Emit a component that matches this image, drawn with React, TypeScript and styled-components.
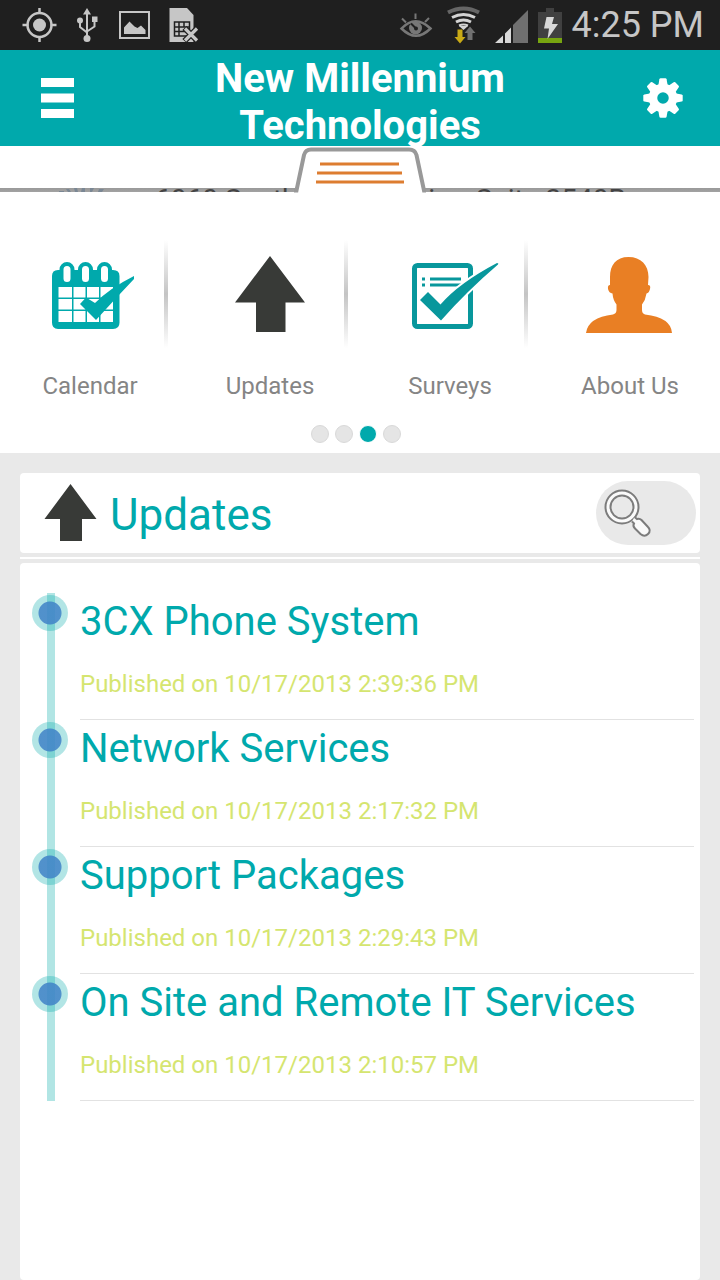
import React from "react";
import styled, { createGlobalStyle } from "styled-components";

const TEAL = "#00a9ac";
const INK = "#383a37";

const GlobalStyle = createGlobalStyle`
  *, *::before, *::after { box-sizing: border-box; }
  body {
    margin: 0;
    background: #e9e9e9;
    font-family: Roboto, "Liberation Sans", sans-serif;
  }
  button { border: 0; padding: 0; background: none; font: inherit; color: inherit; cursor: pointer; }
  svg { display: block; flex: none; }
`;

const Page = styled.div`
  min-height: 100vh;
  display: flex;
  flex-direction: column;
`;

const StatusBar = styled.div`
  height: 50px;
  padding: 0 16px 0 22px;
  display: flex;
  align-items: center;
  justify-content: space-between;
  background: #1f1f1f;
  color: #c6c6c6;
`;

const StatusGroup = styled.div`
  display: flex;
  align-items: center;
`;

const Clock = styled.time`
  margin-left: 9px;
  font-size: 36px;
  line-height: 48px;
  white-space: nowrap;
`;

const Header = styled.header`
  position: relative;
  z-index: 3;
  height: 96px;
  padding: 0 34px;
  display: flex;
  align-items: center;
  justify-content: space-between;
  background: ${TEAL};
  color: #fff;
`;

const AppTitle = styled.h1`
  margin: 0;
  padding-top: 8px;
  max-width: 320px;
  text-align: center;
  font-size: 40px;
  line-height: 47px;
  font-weight: 700;
`;

const IconButton = styled.button`
  width: 46px;
  height: 44px;
  display: grid;
  place-items: center;
`;

const AddressBanner = styled.section`
  position: relative;
  height: 47px;
  overflow: hidden;
  background: #fff;
`;

const AddressLine = styled.div`
  height: 47px;
  padding: 34px 0 0 56px;
  display: flex;
  gap: 51px;
  background: linear-gradient(#fff 42px, #999 42px, #a2a2a2 46px, #fff 46px);
`;

const AddressText = styled.p`
  margin: 0;
  padding-top: 4px;
  height: 12px;
  overflow: hidden;
  font-size: 28px;
  line-height: 32px;
  white-space: nowrap;
  color: #444;
`;

const AddressIcon = styled.svg`
  margin-top: 7px;
`;

const DrawerTab = styled.button`
  position: absolute;
  top: 0;
  left: calc(50% - 66px);
`;

const Menu = styled.nav`
  padding-top: 47px;
  display: grid;
  grid-template-columns: repeat(4, 1fr);
  background: #fff;
`;

const MenuItem = styled.div`
  display: grid;
  grid-template-columns: 16px 1fr 16px;
`;

const MenuButton = styled.button`
  grid-column: 2;
  padding-top: 5px;
  display: flex;
  flex-direction: column;
  align-items: center;
  gap: 27px;
  font-size: 24px;
  line-height: 28px;
  white-space: nowrap;
  color: #858585;
`;

const MenuDivider = styled.span`
  width: 4px;
  height: 108px;
  background: linear-gradient(rgba(190, 190, 190, 0), #c4c4c4 50%, rgba(190, 190, 190, 0));
`;

const Pager = styled.div`
  height: 53px;
  padding: 25px 8px 0 0;
  display: flex;
  justify-content: center;
  gap: 6px;
  background: #fff;
`;

const PagerDot = styled.button<{ $active?: boolean }>`
  width: 18px;
  height: 18px;
  border-radius: 50%;
  border: 1px solid ${(p) => (p.$active ? "#fff" : "#d9d9d9")};
  background: ${(p) => (p.$active ? TEAL : "#e5e5e5")};
`;

const Content = styled.main`
  flex: 1;
  padding: 20px 20px 0;
  display: flex;
  flex-direction: column;
  gap: 4px;
`;

const SectionHeader = styled.div`
  height: 80px;
  padding: 0 4px 0 24px;
  display: flex;
  align-items: center;
  border-radius: 4px;
  background: #fff;
`;

const SectionTitle = styled.h2`
  flex: 1;
  margin: 0;
  padding: 4px 0 0 13px;
  font-size: 44px;
  line-height: 52px;
  font-weight: 400;
  color: ${TEAL};
`;

const SearchButton = styled.button`
  width: 100px;
  height: 64px;
  padding-left: 7px;
  border-radius: 32px;
  background: #e9e9e9;
`;

const Strip = styled.div`
  height: 2px;
  background: #fff;
`;

const UpdateList = styled.ul`
  flex: 1;
  margin: 0;
  padding: 30px 6px 20px 12px;
  list-style: none;
  border-radius: 4px;
  background: #fff;
`;

const UpdateRow = styled.li`
  display: flex;
  gap: 12px;
`;

const Timeline = styled.div`
  width: 36px;
  flex: none;
  padding-top: 2px;
  background: linear-gradient(#b1e5e4, #b1e5e4) 15px 0 / 8px 100% no-repeat;
`;

const TimelineDot = styled.div`
  width: 36px;
  height: 36px;
  border-radius: 50%;
  background: radial-gradient(circle, rgba(62, 133, 198, 0.9) 11px, rgba(0, 169, 169, 0.3) 12px);
`;

const UpdateBody = styled.article`
  flex: 1;
  padding: 5px 0 21px;
  display: flex;
  flex-direction: column;
  gap: 24px;
  border-bottom: 1px solid #e2e2e2;
`;

const UpdateTitle = styled.a`
  font-size: 40px;
  line-height: 48px;
  color: ${TEAL};
  text-decoration: none;
`;

const Published = styled.p`
  margin: 0;
  font-size: 24px;
  line-height: 28px;
  color: #d5e570;
`;

const StatusLeftIcons = () => (
  <svg width="180" height="50" viewBox="22 0 180 50" fill="none" stroke="#c6c6c6" aria-hidden="true">
    <circle cx="39.500" cy="25" r="12" strokeWidth="2.500" />
    <circle cx="39.500" cy="25" r="6.500" fill="#c6c6c6" stroke="none" />
    <path d="M39.500 8v6M39.500 36v6M22.500 25h6M50.500 25h6" strokeWidth="2.500" />
    <path d="M87 14v24M80 22v5l7 5.500M94.500 20v6.500l-7.500 5" strokeWidth="2" />
    <path d="M87 8l4 6.500h-8zM92 16.500h5.500V22H92z" fill="#c6c6c6" stroke="none" />
    <circle cx="80" cy="20.500" r="3" fill="#c6c6c6" stroke="none" />
    <circle cx="87" cy="38.500" r="3.500" fill="#c6c6c6" stroke="none" />
    <path d="M120 12h29v26h-29z" strokeWidth="2" />
    <path d="M124 34v-6.500l5.500-6 5 5 3 1.500 3.500-2.500 4.500 4.500v4z" fill="#c6c6c6" stroke="none" />
    <path d="M169.500 8H187l6.500 7v27h-24z" fill="#c6c6c6" stroke="none" />
    <path d="M174.500 22h15v14h-15zM174.500 27h15M174.500 31.500h15M179 22v14M184 22v5" stroke="#1f1f1f" strokeWidth="1.500" />
    <path d="M184.500 28l13 13M197.500 28l-13 13" stroke="#1f1f1f" strokeWidth="6" />
    <path d="M185 28.500l12 12M197 28.500l-12 12" strokeWidth="3.200" />
  </svg>
);

const StatusRightIcons = () => (
  <svg width="166" height="50" viewBox="397 0 166 50" fill="none" aria-hidden="true">
    <g stroke="#777">
      <path d="M401.500 28.500q14-14.500 29 0q-14.500 14.500-29 0z" strokeWidth="2.500" />
      <path d="M402 18.500l4 4M415.500 13.500v5.500M429 18l-4 4" strokeWidth="2" />
      <circle cx="415.500" cy="28" r="6.500" fill="#777" stroke="none" />
      <path d="M416 28.500l-5-5" stroke="#1f1f1f" strokeWidth="2" />
      <circle cx="416" cy="28.500" r="2" fill="#1f1f1f" stroke="none" />
    </g>
    <path d="M448 12.500q15.500-8 31 0" stroke="#666" strokeWidth="4" />
    <g stroke="#d4d4d4" strokeWidth="3">
      <path d="M452 17.500q11.500-6 23 0" />
      <path d="M456 22q7.500-4 15 0" />
      <path d="M459 25.500q4.500-2 9 0" strokeWidth="2" />
    </g>
    <path d="M459 26h9l-4.500 4z" fill="#d4d4d4" />
    <path d="M457.500 29.500h5V37h3l-5.500 6.500-5.500-6.500h3z" fill="#c9aa16" />
    <path d="M470 26.500l5.500 6.500h-3v7h-5v-7h-3z" fill="#707070" />
    <path d="M495 43l8-7.500V43zM505 33.500l6-6V43h-6z" fill="#d8d8d8" />
    <path d="M513 25l15-15v33h-15z" fill="#707070" />
    <path d="M546 8h8v4h8v26h-24V12h8z" fill="#404040" />
    <path d="M538 38h24v5h-24z" fill="#77a510" />
    <path d="M546.500 17h7.500l-2 7h6l-10.500 15 1.500-10.500h-5z" fill="#d8d8d8" />
  </svg>
);

const BarsIcon = () => (
  <svg width="33" height="40" fill="#fff" aria-hidden="true">
    <path d="M0 0h33v9H0zM0 15.500h33v9H0zM0 31h33v9H0z" />
  </svg>
);

const GearIcon = () => (
  <svg width="40" height="40" viewBox="-20 -20 40 40" fill="#fff" aria-hidden="true">
    <circle r="10" fill="none" stroke="#fff" strokeWidth="8.500" />
    {[0, 45, 90, 135, 180, 225, 270, 315].map((a) => (
      <path key={a} d="M-4.800-12l1.200-6.700q.2-1 1.200-1h4.800q1 0 1.200 1L4.800-12z" transform={`rotate(${a})`} />
    ))}
  </svg>
);

const TabIcon = () => (
  <svg width="132" height="47" viewBox="0 0 132 47" fill="none" aria-hidden="true">
    <path d="M0 46.500L2.500 43 10 9Q11.500 3 17 3h99q5.500 0 7 6l7 34 1.500 3.500z" fill="#fff" />
    <path d="M0 44.500h2.500L10 9Q11.500 3.500 17 3.500h98q6 0 7.500 5.500l7.500 35.500h2" stroke="#999" strokeWidth="4" />
    <path d="M26 18h79M23 27h85M22 36h88" stroke="#dd7d30" strokeWidth="3" />
  </svg>
);

const BuildingIcon = () => (
  <AddressIcon width="48" height="6" fill="#7a8794" aria-hidden="true">
    <path d="M3 4h5v1H3zM10 2l3 0 2 3h-3zM18 1h3l1 4h-3zM26 1h3v4h-4zM34 1h4l-2 4h-2zM43 2h5l-2 3h-4z" />
  </AddressIcon>
);

const CalendarIcon = () => (
  <svg width="100" height="100" viewBox="40 245 100 100" aria-hidden="true">
    <path fill={TEAL} d="M58 270h55q6.500 0 6.500 6v46.500q0 6.500-6.500 6.500H58q-6 0-6-6.500V276q0-6 6-6z" />
    <path stroke={TEAL} strokeWidth="15" strokeLinecap="round" d="M67 269.500v10M85.500 269.500v10M104.500 269.500v10" />
    <path stroke="#fff" strokeWidth="7" strokeLinecap="round" d="M67 269.500v9M85.500 269.500v9M104.500 269.500v9" />
    <path fill="#fff" d="M58.500 287h13.500v10.500H58.500zM73.500 287h12v10.500h-12zM87 287h12v10.500H87zM100.500 287h12.500v10.500h-12.500zM58.500 299h13.500v10.500H58.500zM73.500 299h12v10.500h-12zM87 299h12v10.500H87zM100.500 299h12.500v10.500h-12.500zM58.500 311h13.500v11H58.500zM73.500 311h12v11h-12zM87 311h12v11H87zM100.500 311h12.500v11h-12.500z" />
    <path fill={TEAL} d="M80 304l6-6.500 9 5.500q15-15 39-27v3q-19 20-38 41z" />
  </svg>
);

const ArrowIcon = () => (
  <svg width="100" height="100" viewBox="220 245 100 100" fill={INK} aria-hidden="true">
    <path d="M270 256l35 46.500h-19.500V332h-29.500v-29.500H235z" />
  </svg>
);

const SmallArrowIcon = () => (
  <svg width="53" height="58" viewBox="0 0 53 58" fill={INK} aria-hidden="true">
    <path d="M26.500 0L52.500 35H38v22H16V35H0.500z" />
  </svg>
);

const SurveyIcon = () => (
  <svg width="100" height="100" viewBox="400 245 100 100" aria-hidden="true">
    <rect x="414.500" y="265.500" width="56" height="61" rx="3" fill="#fff" stroke="#08979c" strokeWidth="5" />
    <path fill="#08979c" d="M422 277.500h3v3h-3zM422 283.500h3v3h-3zM430 277.500h31v3h-31zM430 283.500h31v3h-31z" />
    <path fill="#08979c" stroke="#fff" strokeWidth="4" paintOrder="stroke" d="M420 300l8-8 12.500 12.500Q459 283 497 263q2 0 1 1.500Q467 291 441 320.500z" />
  </svg>
);

const PersonIcon = () => (
  <svg width="100" height="100" viewBox="580 245 100 100" fill="#e97f24" aria-hidden="true">
    <path d="M628.500 257C641 257 648.500 265 648.500 277L648 285Q651 285 650 289Q649 293 646.500 293.500Q645.500 300 642 304.500V310Q642 313.500 645 314.500Q671 317.500 672 333H586Q588 317.500 613 314.500Q616.500 313.500 616.500 310V304.500Q613 300 612.500 293.500Q609 293 608 289Q607.500 285 610 285V277C610 265 616 257 628.500 257Z" />
  </svg>
);

const SearchIcon = () => (
  <svg width="50" height="52" viewBox="0 0 50 52" fill="none" aria-hidden="true">
    <g stroke="#7c7c7c" strokeWidth="2">
      <circle cx="19" cy="20" r="16.500" fill="#fafafa" />
      <circle cx="19" cy="20" r="11.500" fill="#e9e9e9" />
      <path
        fill="#fafafa"
        d="M29 34.500l2 2q-1.500 2.500 1 5l5.500 5.500q4 3.500 7.500 0t0-7L38.500 33q-2-2-4.500-1l-2.500-2"
      />
    </g>
  </svg>
);

const menuItems = [
  { label: "Calendar", icon: <CalendarIcon /> },
  { label: "Updates", icon: <ArrowIcon /> },
  { label: "Surveys", icon: <SurveyIcon /> },
  { label: "About Us", icon: <PersonIcon /> },
];

const updates = [
  { title: "3CX Phone System", published: "10/17/2013 2:39:36 PM" },
  { title: "Network Services", published: "10/17/2013 2:17:32 PM" },
  { title: "Support Packages", published: "10/17/2013 2:29:43 PM" },
  { title: "On Site and Remote IT Services", published: "10/17/2013 2:10:57 PM" },
];

export default function App() {
  return (
    <Page>
      <GlobalStyle />
      <StatusBar>
        <StatusLeftIcons />
        <StatusGroup>
          <StatusRightIcons />
          <Clock>4:25 PM</Clock>
        </StatusGroup>
      </StatusBar>
      <Header>
        <IconButton aria-label="Menu">
          <BarsIcon />
        </IconButton>
        <AppTitle>New Millennium Technologies</AppTitle>
        <IconButton aria-label="Settings">
          <GearIcon />
        </IconButton>
      </Header>
      <AddressBanner>
        <AddressLine>
          <BuildingIcon />
          <AddressText>6060 South Warner Drive, Suite 3540B</AddressText>
        </AddressLine>
        <DrawerTab aria-label="Toggle drawer">
          <TabIcon />
        </DrawerTab>
      </AddressBanner>
      <Menu>
        {menuItems.map((item, i) => (
          <MenuItem key={item.label}>
            <MenuButton>
              {item.icon}
              {item.label}
            </MenuButton>
            {i < menuItems.length - 1 && <MenuDivider />}
          </MenuItem>
        ))}
      </Menu>
      <Pager>
        {[0, 1, 2, 3].map((n) => (
          <PagerDot key={n} $active={n === 2} aria-label={`Page ${n + 1}`} />
        ))}
      </Pager>
      <Content>
        <SectionHeader>
          <SmallArrowIcon />
          <SectionTitle>Updates</SectionTitle>
          <SearchButton aria-label="Search">
            <SearchIcon />
          </SearchButton>
        </SectionHeader>
        <Strip />
        <UpdateList>
          {updates.map((u) => (
            <UpdateRow key={u.title}>
              <Timeline>
                <TimelineDot />
              </Timeline>
              <UpdateBody>
                <UpdateTitle href="#">{u.title}</UpdateTitle>
                <Published>Published on {u.published}</Published>
              </UpdateBody>
            </UpdateRow>
          ))}
        </UpdateList>
      </Content>
    </Page>
  );
}
